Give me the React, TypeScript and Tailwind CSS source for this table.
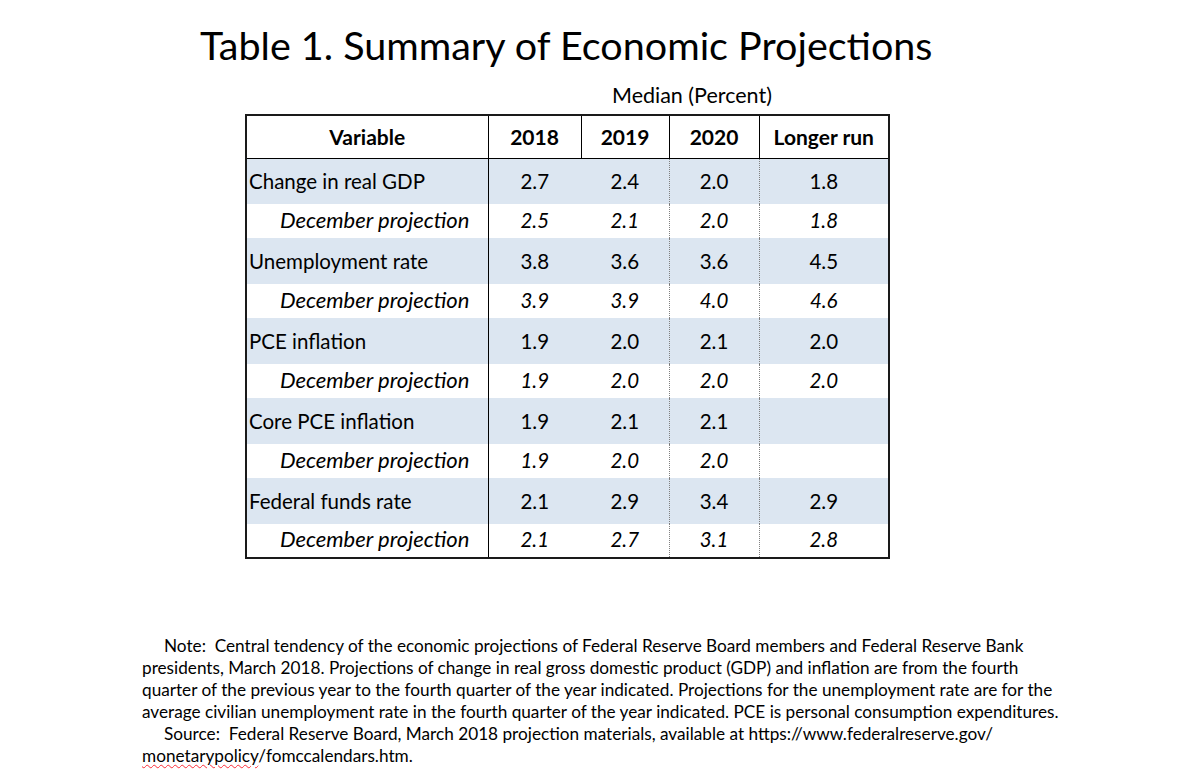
const rows = [
  { label: "Change in real GDP", vals: ["2.7", "2.4", "2.0", "1.8"], dec: ["2.5", "2.1", "2.0", "1.8"] },
  { label: "Unemployment rate", vals: ["3.8", "3.6", "3.6", "4.5"], dec: ["3.9", "3.9", "4.0", "4.6"] },
  { label: "PCE inflation", vals: ["1.9", "2.0", "2.1", "2.0"], dec: ["1.9", "2.0", "2.0", "2.0"] },
  { label: "Core PCE inflation", vals: ["1.9", "2.1", "2.1", ""], dec: ["1.9", "2.0", "2.0", ""] },
  { label: "Federal funds rate", vals: ["2.1", "2.9", "3.4", "2.9"], dec: ["2.1", "2.7", "3.1", "2.8"] },
];

const Cells = ({ vals, italic }: { vals: string[]; italic?: boolean }) => (
  <>
    <td className={`border-l border-black text-center ${italic ? "italic" : ""}`}>{vals[0]}</td>
    <td className={`text-center ${italic ? "italic" : ""}`}>{vals[1]}</td>
    <td className={`border-l border-dotted border-[#7f7f7f] text-center ${italic ? "italic" : ""}`}>{vals[2]}</td>
    <td className={`border-l border-dotted border-[#7f7f7f] text-center ${italic ? "italic" : ""}`}>{vals[3]}</td>
  </>
);

export default function App() {
  return (
    <div className="w-[1194px] h-[783px] bg-white text-black font-['Lato',sans-serif] overflow-hidden">
      <h1 className="pl-[200px] pt-[21px] text-[39.5px] leading-[48px] font-normal whitespace-nowrap">
        Table 1. Summary of Economic Projections
      </h1>
      <div className="pl-[612px] mt-[13px] text-[21.5px] leading-[26px] whitespace-nowrap">Median (Percent)</div>
      <table className="ml-[245px] mt-[6px] w-[643px] border-collapse border-2 border-[#1a1a1a] table-fixed text-[20.5px] leading-[24px]">
        <colgroup>
          <col className="w-[242px]" />
          <col className="w-[93px]" />
          <col className="w-[88px]" />
          <col className="w-[90px]" />
          <col className="w-[130px]" />
        </colgroup>
        <thead>
          <tr className="h-[43px] font-bold text-[21px]">
            <th className="text-center border-b border-black">Variable</th>
            <th className="text-center border-b border-l border-black">2018</th>
            <th className="text-center border-b border-l border-black">2019</th>
            <th className="text-center border-b border-l border-black">2020</th>
            <th className="text-center border-b border-l border-black">Longer run</th>
          </tr>
        </thead>
        <tbody>
          {rows.map((r) => (
            <>
              <tr key={r.label} className="h-[46px] bg-[#dce6f1]">
                <td className="pl-[2px] whitespace-nowrap">{r.label}</td>
                <Cells vals={r.vals} />
              </tr>
              <tr key={r.label + "-dec"} className="h-[34px] bg-white [&>td]:pb-[3px]">
                <td className="pl-[33px] italic whitespace-nowrap text-[22px]">December projection</td>
                <Cells vals={r.dec} italic />
              </tr>
            </>
          ))}
        </tbody>
      </table>
      <div className="ml-[142px] mt-[76px] text-[17.2px] leading-[22px] whitespace-nowrap">
        <div className="pl-[22px]">Note:&nbsp; Central tendency of the economic projections of Federal Reserve Board members and Federal Reserve Bank</div>
        <div>presidents, March 2018. Projections of change in real gross domestic product (GDP) and inflation are from the fourth</div>
        <div>quarter of the previous year to the fourth quarter of the year indicated. Projections for the unemployment rate are for the</div>
        <div>average civilian unemployment rate in the fourth quarter of the year indicated. PCE is personal consumption expenditures.</div>
        <div className="pl-[22px]">Source:&nbsp; Federal Reserve Board, March 2018 projection materials, available at https://www.federalreserve.gov/</div>
        <div>
          <span className="underline decoration-wavy decoration-red-500 decoration-1 underline-offset-2">monetarypolicy</span>/fomccalendars.htm.
        </div>
      </div>
    </div>
  );
}
